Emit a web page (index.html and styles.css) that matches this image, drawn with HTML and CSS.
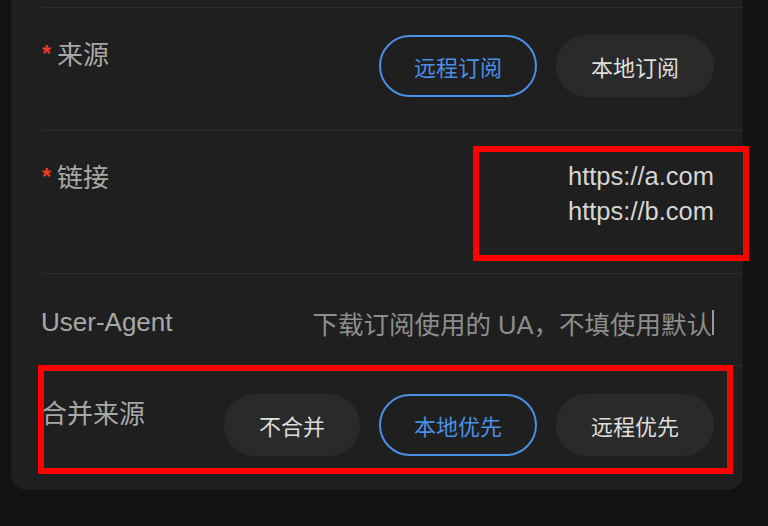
FILE: index.html
```html
<!DOCTYPE html>
<html lang="zh-CN">
<head>
<meta charset="utf-8">
<title>订阅设置</title>
<link rel="stylesheet" href="styles.css">
</head>
<body>
<div class="page">
  <div class="card">
    <div class="row row-prev"></div>

    <div class="row">
      <div class="label"><span class="req">*</span>来源</div>
      <div class="seg">
        <div class="opt active">远程订阅</div>
        <div class="opt">本地订阅</div>
      </div>
    </div>

    <div class="row row-links">
      <div class="label"><span class="req">*</span>链接</div>
      <div class="values">
        <div class="value">https://a.com</div>
        <div class="value">https://b.com</div>
      </div>
      <div class="mark mark-links"></div>
    </div>

    <div class="row row-input">
      <div class="label">User-Agent</div>
      <div class="input"><span class="placeholder">下载订阅使用的 UA，不填使用默认</span><span class="caret"></span></div>
    </div>

    <div class="row row-last">
      <div class="label">合并来源</div>
      <div class="seg">
        <div class="opt">不合并</div>
        <div class="opt active">本地优先</div>
        <div class="opt">远程优先</div>
      </div>
      <div class="mark mark-merge"></div>
    </div>
  </div>
</div>
</body>
</html>
```

FILE: styles.css
```css
* {
  box-sizing: border-box;
}

html, body {
  margin: 0;
  padding: 0;
}

body {
  background: #121212;
  font-family: "Liberation Sans", "Noto Sans CJK SC", sans-serif;
  width: 768px;
  height: 526px;
  overflow: hidden;
}

.page {
  padding: 0 25px 0 11px;
}

.card {
  background: #1f1f1f;
  border-radius: 0 0 16px 16px;
  width: 732px;
}

.row {
  position: relative;
  display: flex;
  justify-content: space-between;
  align-items: flex-start;
  margin-left: 30px;
  padding: 27px 29px 33px 0;
  border-bottom: 1px solid #2c2c2c;
}

.row-prev {
  height: 8px;
  padding: 0;
}

.row-input {
  padding: 31px 29px 26px 0;
}

.row-last {
  border-bottom: none;
  padding: 28px 29px 34px 0;
}

.label {
  font-size: 26px;
  line-height: 38px;
  color: #a8a8a8;
  white-space: nowrap;
}

.row-input .label {
  line-height: 34px;
}

.row-last .label {
  margin-top: 1px;
}

.req {
  color: #ec3b26;
  font-size: 23px;
  font-weight: bold;
  margin-right: 6px;
  margin-left: 1px;
  vertical-align: 2px;
}

.seg {
  display: flex;
  gap: 19px;
}

.opt {
  height: 62px;
  padding: 0 33px;
  border: 2px solid #2a2a2a;
  border-radius: 31px;
  background: #2a2a2a;
  color: #dedede;
  font-size: 22px;
  display: flex;
  align-items: center;
  justify-content: center;
  white-space: nowrap;
}

.opt.active {
  background: transparent;
  border-color: #4b8fe6;
  color: #4b8fe6;
}

.values {
  min-height: 82px;
  padding-top: 1px;
  text-align: right;
}

.value {
  font-size: 25.5px;
  line-height: 35px;
  color: #d6d6d6;
}

.input {
  display: flex;
  align-items: center;
  height: 34px;
}

.placeholder {
  font-size: 25.5px;
  color: #8e8e8e;
  white-space: nowrap;
}

.caret {
  width: 2px;
  height: 25px;
  background: #9a9a9a;
}

.mark {
  position: absolute;
  border: 6px solid #ff0000;
  pointer-events: none;
}

.mark-links {
  left: 432px;
  top: 15px;
  width: 276px;
  height: 115px;
}

.mark-merge {
  left: -3px;
  top: -1px;
  width: 695px;
  height: 109px;
}
```
